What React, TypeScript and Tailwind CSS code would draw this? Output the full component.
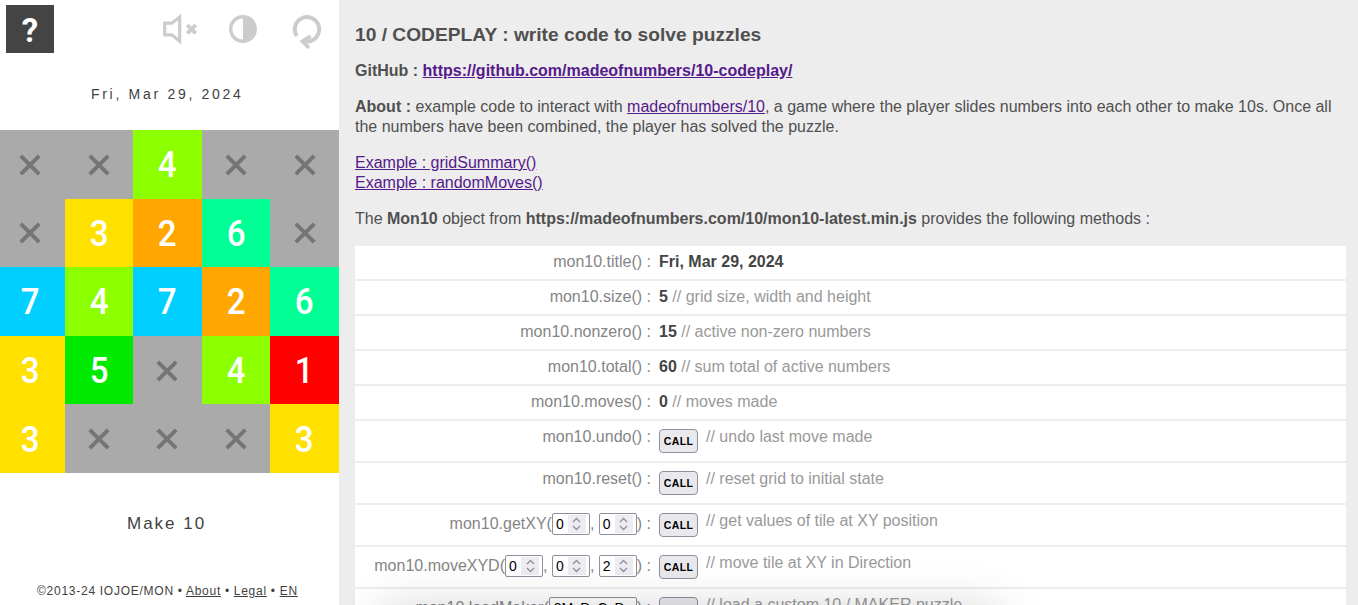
import React from "react";

const GRID: number[][] = [
  [0, 0, 4, 0, 0],
  [0, 3, 2, 6, 0],
  [7, 4, 7, 2, 6],
  [3, 5, 0, 4, 1],
  [3, 0, 0, 0, 3],
];

const TILE_COLORS: Record<number, string> = {
  0: "bg-[#aaaaaa]",
  1: "bg-[#ff0000]",
  2: "bg-[#ffa600]",
  3: "bg-[#ffe100]",
  4: "bg-[#8cff00]",
  5: "bg-[#00ea00]",
  6: "bg-[#00ff95]",
  7: "bg-[#00cfff]",
};

function Tile({ value }: { value: number }) {
  return (
    <div className={`flex items-center justify-center pt-px ${TILE_COLORS[value]}`}>
      {value === 0 ? (
        <svg width="22" height="22" viewBox="0 0 22 22" className="stroke-[#757575]" strokeWidth="4">
          <path d="M1.8 1.8 20.2 20.2M20.2 1.8 1.8 20.2" />
        </svg>
      ) : (
        <span className="scale-x-[.92] pt-px font-['Roboto',sans-serif] text-[36px] leading-none font-medium text-white">
          {value}
        </span>
      )}
    </div>
  );
}

function SoundIcon() {
  return (
    <svg width="36" height="34" viewBox="0 0 36 34" fill="none" stroke="#cccccc">
      <path d="M2.7 11.2H9.8L17.7 5V29.2L9.8 22.8H2.7Z" strokeWidth="3.2" />
      <path d="M25.3 13 33.7 21.4M33.7 13 25.3 21.4" strokeWidth="3.8" />
    </svg>
  );
}

function ContrastIcon() {
  return (
    <svg width="28" height="28" viewBox="0 0 28 28">
      <circle cx="14" cy="14" r="12.3" fill="none" stroke="#cccccc" strokeWidth="3.4" />
      <path d="M14 1V27A13 13 0 0 0 14 1Z" fill="#cccccc" />
    </svg>
  );
}

function RestartIcon() {
  return (
    <svg width="30" height="40" viewBox="0 0 30 40" fill="none" stroke="#cccccc" strokeWidth="4">
      <path d="M4.8 26A12.2 12.2 0 1 1 16.5 31.4L10.5 31.4" />
      <path d="M18.5 26 10.5 31.4 17 38" strokeWidth="3.8" />
    </svg>
  );
}

function CallButton() {
  return (
    <button className="flex h-6 w-[39px] shrink-0 items-center justify-center rounded-[4px] border border-[#8f8f9d] bg-[#e9e9ed] font-['Liberation_Sans',sans-serif] text-[10.5px] font-bold tracking-[.4px] text-black">
      CALL
    </button>
  );
}

function NumberBox({ value }: { value: string }) {
  return (
    <span className="flex h-[22px] w-[38px] items-center justify-between rounded-[2px] border border-[#8f8f9d] bg-white pr-[3px] pl-[3px] text-[14px] text-black">
      {value}
      <span className="flex h-[18px] w-[18px] items-center justify-center bg-[#ececf1]">
        <svg width="9" height="14" viewBox="0 0 9 14" fill="none" stroke="#8f8f9d" strokeWidth="1.3">
          <path d="M1 5 4.5 1.5 8 5M1 9 4.5 12.5 8 9" />
        </svg>
      </span>
    </span>
  );
}

function InfoRow({ name, value, note }: { name: string; value: string; note?: string }) {
  return (
    <div className="flex h-[33px] items-center bg-white pb-px">
      <span className="w-[296px] shrink-0 text-right text-[#858585]">{name} :</span>
      <span className="ml-2 text-[#999999]">
        <b className="text-[#444444]">{value}</b>
        {note ? ` // ${note}` : ""}
      </span>
    </div>
  );
}

function CallRow({ name, args, note }: { name: string; args?: string[]; note: string }) {
  return (
    <div className="flex h-10 shrink-0 items-start bg-white">
      <span
        className={
          args
            ? "flex h-[38px] w-[296px] shrink-0 items-center justify-end text-[#858585]"
            : "flex w-[296px] shrink-0 justify-end pt-[6px] text-[#858585]"
        }
      >
        {name}(
        {args?.map((arg, i) => (
          <React.Fragment key={i}>
            {i > 0 && <span className="whitespace-pre">, </span>}
            {arg.length > 1 ? (
              <span className="flex h-[22px] w-[88px] items-center rounded-[2px] border border-[#8f8f9d] bg-white pl-1 text-[14px] text-black">
                {arg}
              </span>
            ) : (
              <NumberBox value={arg} />
            )}
          </React.Fragment>
        ))}
        ) :
      </span>
      <span className="ml-2 pt-2">
        <CallButton />
      </span>
      <span className="ml-2 pt-[6px] text-[#999999]">// {note}</span>
    </div>
  );
}

export default function App() {
  return (
    <div className="relative flex h-[605px] w-[1358px] overflow-hidden bg-[#ededed] font-['Liberation_Sans',Arial,sans-serif] text-base leading-5 text-[#505050]">
      <aside className="flex w-[339px] shrink-0 flex-col overflow-hidden bg-white text-[#3f3f3f]">
        <header className="flex h-[60px] shrink-0 items-start pt-[5px] pl-1.5">
          <div className="flex size-12 shrink-0 items-center justify-center bg-[#444444] pt-0.5 font-['Roboto',sans-serif] text-[33px] leading-none font-bold text-white">
            ?
          </div>
          <div className="mt-[7px] ml-[108px]"><SoundIcon /></div>
          <div className="mt-[10px] ml-[31px]"><ContrastIcon /></div>
          <div className="mt-[5px] ml-[35px]"><RestartIcon /></div>
        </header>
        <div className="mt-6 h-[46px] shrink-0 pl-[91px] text-[14px] whitespace-nowrap tracking-[2.7px]">Fri, Mar 29, 2024</div>
        <div className="-ml-1 grid h-[343px] w-[343px] shrink-0 grid-cols-5 grid-rows-5">
          {GRID.flat().map((value, i) => (
            <Tile key={i} value={value} />
          ))}
        </div>
        <div className="mt-[41px] pl-[127px] text-[17px] whitespace-nowrap tracking-[2px]">Make 10</div>
        <footer className="mt-[47px] pl-[37px] text-[12px] whitespace-nowrap tracking-[.75px] [word-spacing:-.2px]">
          ©2013-24 IOJOE/MON • <a className="underline">About</a> • <a className="underline">Legal</a> •{" "}
          <a className="underline">EN</a>
        </footer>
      </aside>

      <main className="flex w-[1007px] shrink-0 flex-col pl-4">
        <h1 className="mt-[25px] text-[19.2px] leading-5 font-bold">10 / CODEPLAY : write code to solve puzzles</h1>
        <p className="mt-4 font-bold">
          GitHub : <a className="text-[#551a8b] underline">https://github.com/madeofnumbers/10-codeplay/</a>
        </p>
        <p className="mt-4 whitespace-nowrap">
          <b>About :</b> example code to interact with <a className="text-[#551a8b] underline">madeofnumbers/10</a>, a
          game where the player slides numbers into each other to make 10s. Once all
          <br />
          the numbers have been combined, the player has solved the puzzle.
        </p>
        <p className="mt-4 text-[#551a8b]">
          <a className="underline">Example : gridSummary()</a>
          <br />
          <a className="underline">Example : randomMoves()</a>
        </p>
        <p className="mt-4">
          The <b>Mon10</b> object from <b>https://madeofnumbers.com/10/mon10-latest.min.js</b> provides the following
          methods :
        </p>
        <section className="mt-[17px] flex flex-col gap-0.5">
          <InfoRow name="mon10.title()" value="Fri, Mar 29, 2024" />
          <InfoRow name="mon10.size()" value="5" note="grid size, width and height" />
          <InfoRow name="mon10.nonzero()" value="15" note="active non-zero numbers" />
          <InfoRow name="mon10.total()" value="60" note="sum total of active numbers" />
          <InfoRow name="mon10.moves()" value="0" note="moves made" />
          <CallRow name="mon10.undo" note="undo last move made" />
          <CallRow name="mon10.reset" note="reset grid to initial state" />
          <CallRow name="mon10.getXY" args={["0", "0"]} note="get values of tile at XY position" />
          <CallRow name="mon10.moveXYD" args={["0", "0", "2"]} note="move tile at XY in Direction" />
          <CallRow name="mon10.loadMaker" args={["3MxDsCsDs"]} note="load a custom 10 / MAKER puzzle" />
        </section>
      </main>
      <div className="pointer-events-none absolute top-[632px] left-[400px] h-10 w-[580px] shadow-[0_0_50px_20px_rgba(0,0,0,0.2)]" />
    </div>
  );
}
